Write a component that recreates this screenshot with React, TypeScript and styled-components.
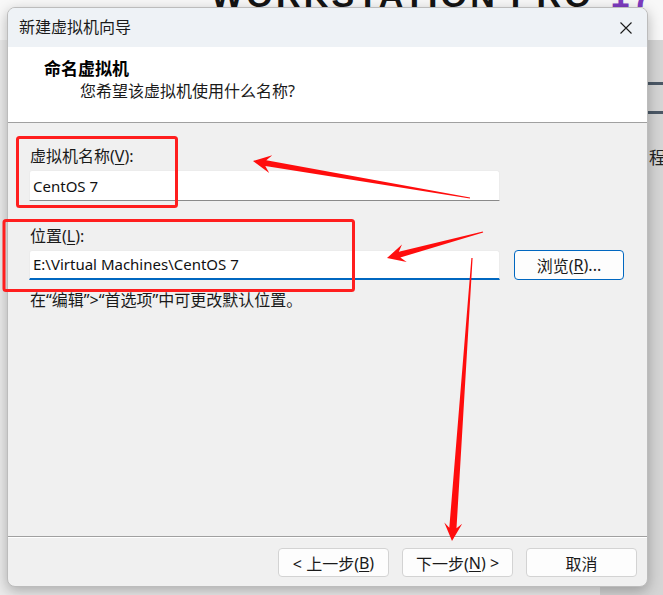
import React from "react";
import styled, { createGlobalStyle } from "styled-components";

const GlobalStyle = createGlobalStyle`
  html, body {
    margin: 0;
    padding: 0;
    background: #f0f0f0;
  }
  body {
    font-family: "Noto Sans", "Noto Sans CJK SC", sans-serif;
    color: #1a1a1a;
  }
`;

type Point = [number, number];

type Arrow = {
  tail: Point;
  tip: Point;
  shaft?: number;
};

// red hand-drawn arrows on top of the screenshot
const arrows: Arrow[] = [
  { tail: [470, 198], tip: [253, 161] },
  { tail: [483, 232], tip: [387, 258] },
  { tail: [472, 258], tip: [452, 541], shaft: 3.6 },
];

function arrowPoints({ tail, tip, shaft = 3 }: Arrow) {
  const dx = tail[0] - tip[0];
  const dy = tail[1] - tip[1];
  const len = Math.hypot(dx, dy);
  const ux = dx / len;
  const uy = dy / len;
  const px = -uy;
  const py = ux;
  const pt = (a: number, b: number) =>
    `${(tip[0] + ux * a + px * b).toFixed(1)},${(tip[1] + uy * a + py * b).toFixed(1)}`;
  return [
    pt(0, 0),
    pt(18, 9),
    pt(13, shaft),
    pt(len, 0.6),
    pt(len, -0.6),
    pt(13, -shaft),
    pt(18, -9),
  ].join(" ");
}

export default function App() {
  return (
    <>
      <GlobalStyle />
      <Screen>
        <Backdrop>
          <BrandBar>
            <Brand>
              WORKSTATION PRO <BrandNum>17</BrandNum>
            </Brand>
          </BrandBar>
          <BackMain>
            <BackLeft />
            <BackPanel>
              <PanelBar $top={42} />
              <PanelBar $top={26} />
              <PanelText>程</PanelText>
            </BackPanel>
          </BackMain>
        </Backdrop>

        <Dialog>
          <TitleBar>
            <TitleText>新建虚拟机向导</TitleText>
            <CloseButton aria-label="关闭">
              <svg width="12" height="12" viewBox="0 0 12 12">
                <path d="M0.5 0.5 L11.5 11.5 M11.5 0.5 L0.5 11.5" stroke="#1a1a1a" strokeWidth="1.1" />
              </svg>
            </CloseButton>
          </TitleBar>

          <Header>
            <Heading>命名虚拟机</Heading>
            <SubHeading>您希望该虚拟机使用什么名称?</SubHeading>
          </Header>

          <Body>
            <FieldLabel>
              虚拟机名称(<Key>V</Key>):
            </FieldLabel>
            <InputRow>
              <TextBox>CentOS 7</TextBox>
            </InputRow>

            <FieldLabel $gap={25}>
              位置(<Key>L</Key>):
            </FieldLabel>
            <InputRow>
              <TextBox $focused>E:\Virtual Machines\CentOS 7</TextBox>
              <Button $primary $width={110} $height={30}>
                浏览(<Key>R</Key>)...
              </Button>
            </InputRow>

            <Hint>在“编辑”&gt;“首选项”中可更改默认位置。</Hint>
          </Body>

          <Footer>
            <Button>
              &lt; 上一步(<Key>B</Key>)
            </Button>
            <Button>
              下一步(<Key>N</Key>) &gt;
            </Button>
            <Button>取消</Button>
          </Footer>
        </Dialog>

        <Annotations width="663" height="595" viewBox="0 0 663 595">
          <rect x="17.5" y="137.5" width="159" height="69" rx="2" fill="none" stroke="#ff1e1e" strokeWidth="3" />
          <rect x="4" y="220.5" width="349.5" height="70" rx="2" fill="none" stroke="#ff1e1e" strokeWidth="3" />
          {arrows.map((a, i) => (
            <polygon key={i} points={arrowPoints(a)} fill="#ff0d0d" />
          ))}
        </Annotations>
      </Screen>
    </>
  );
}

/* styles */

const Screen = styled.div`
  position: relative;
  width: 663px;
  height: 595px;
  overflow: hidden;
  background: #f0f0f0;
`;

const Backdrop = styled.div`
  display: flex;
  flex-direction: column;
  height: 100%;
`;

const BrandBar = styled.div`
  height: 40px;
  flex-shrink: 0;
  overflow: hidden;
  background: #f8f8f8;
  padding-left: 211px;
`;

const Brand = styled.div`
  margin-top: -22px;
  font-family: "Liberation Sans", Arial, sans-serif;
  font-weight: 700;
  font-size: 34px;
  line-height: 1;
  letter-spacing: 3.2px;
  color: #141414;
  white-space: nowrap;
`;

const BrandNum = styled.span`
  color: #7d3cc0;
  margin-left: 4px;
`;

const BackMain = styled.div`
  flex: 1;
  display: flex;
`;

const BackLeft = styled.div`
  flex: 1;
  background: #ebebeb;
`;

const BackPanel = styled.div`
  width: 63px;
  display: flex;
  flex-direction: column;
  background: #d5d5d5;
`;

const PanelBar = styled.div<{ $top: number }>`
  height: 3px;
  margin-top: ${({ $top }) => $top}px;
  background: #4b5866;
`;

const PanelText = styled.div`
  margin-top: 33px;
  padding-left: 49px;
  font-family: "Noto Sans CJK SC", sans-serif;
  font-size: 17px;
  line-height: 20px;
  color: #222;
  white-space: nowrap;
`;

const Dialog = styled.div`
  position: absolute;
  left: 7px;
  top: 7px;
  width: 641px;
  height: 580px;
  box-sizing: border-box;
  display: flex;
  flex-direction: column;
  border: 1px solid #bcbcbc;
  border-radius: 8px;
  overflow: hidden;
  background: #f0f0f0;
  box-shadow: 0 4px 14px rgba(0, 0, 0, 0.28);
`;

const TitleBar = styled.div`
  height: 39px;
  flex-shrink: 0;
  box-sizing: border-box;
  display: flex;
  align-items: center;
  justify-content: space-between;
  padding: 0 15px 3px 11px;
  background: #eef2f6;
`;

const TitleText = styled.div`
  font-family: "Noto Sans CJK SC", sans-serif;
  font-size: 16px;
  line-height: 20px;
  color: #1a1a1a;
`;

const CloseButton = styled.div`
  width: 12px;
  height: 12px;
  display: flex;
  margin-top: 3px;
`;

const Header = styled.div`
  height: 76px;
  flex-shrink: 0;
  box-sizing: border-box;
  padding: 10px 0 0 36px;
  background: #ffffff;
  border-bottom: 1px solid #a0a0a0;
`;

const Heading = styled.div`
  font-family: "Noto Sans CJK SC", sans-serif;
  font-weight: 700;
  font-size: 17px;
  line-height: 22px;
  color: #000;
`;

const SubHeading = styled.div`
  margin-top: 2px;
  padding-left: 36px;
  font-size: 16px;
  line-height: 20px;
  color: #1a1a1a;
`;

const Body = styled.div`
  flex: 1;
  display: flex;
  flex-direction: column;
  padding: 23px 0 0 21px;
  border-bottom: 1px solid #a0a0a0;
  box-shadow: 0 1px 0 #ffffff;
`;

const FieldLabel = styled.div<{ $gap?: number }>`
  margin-top: ${({ $gap }) => $gap ?? 0}px;
  font-size: 16px;
  line-height: 20px;
  padding-left: 1px;
`;

const Key = styled.u`
  text-underline-offset: 2px;
`;

const InputRow = styled.div`
  display: flex;
  align-items: center;
  gap: 14px;
  margin-top: 4px;
`;

const TextBox = styled.div<{ $focused?: boolean }>`
  width: 471px;
  height: ${({ $focused }) => ($focused ? 30 : 31)}px;
  box-sizing: border-box;
  display: flex;
  align-items: center;
  padding: 0 0 ${({ $focused }) => ($focused ? 1 : 0)}px 3px;
  background: #ffffff;
  border: 1px solid #ececec;
  border-bottom: ${({ $focused }) => ($focused ? "2px solid #0067c0" : "1px solid #8a8a8a")};
  border-radius: 3px 3px 0 0;
  font-size: 15px;
  color: #111;
  white-space: nowrap;
`;

const Hint = styled.div`
  margin-top: 10px;
  padding-left: 1px;
  font-size: 16px;
  line-height: 20px;
  color: #1a1a1a;
`;

const Footer = styled.div`
  height: 49px;
  flex-shrink: 0;
  box-sizing: border-box;
  display: flex;
  justify-content: flex-end;
  align-items: flex-start;
  gap: 13px;
  padding: 11px 10px 0 0;
`;

const Button = styled.div<{ $primary?: boolean; $width?: number; $height?: number }>`
  width: ${({ $width }) => $width ?? 111}px;
  height: ${({ $height }) => $height ?? 29}px;
  box-sizing: border-box;
  display: flex;
  align-items: center;
  justify-content: center;
  background: #fdfdfd;
  border: 1px solid ${({ $primary }) => ($primary ? "#0067c0" : "#d3d3d3")};
  border-radius: 4px;
  font-size: 16px;
  color: #1a1a1a;
  white-space: nowrap;
`;

const Annotations = styled.svg`
  position: absolute;
  left: 0;
  top: 0;
  pointer-events: none;
`;
